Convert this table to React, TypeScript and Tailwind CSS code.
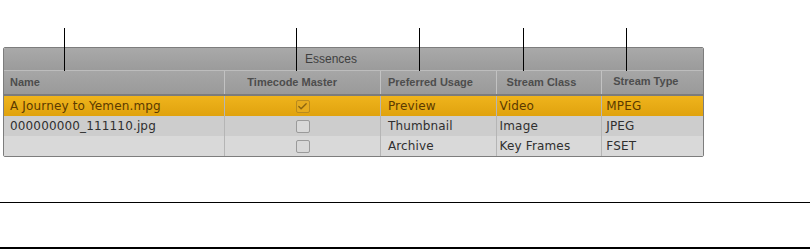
import { Check } from 'lucide-react'

const cols = [
  { label: 'Name', w: 'w-[221px]', head: 'pl-[6px]', cell: 'pl-[6px]' },
  { label: 'Timecode Master', w: 'w-[156px]', head: 'pl-[22px]', cell: 'justify-center' },
  { label: 'Preferred Usage', w: 'w-[116px]', head: 'pl-[7px]', cell: 'pl-[7px]' },
  { label: 'Stream Class', w: 'w-[106px]', head: 'pl-[10px]', cell: 'pl-[3px]' },
  { label: 'Stream Type', w: 'w-[102px]', head: 'pl-[11px] pb-[3px]', cell: 'pl-[4px]' },
]

const rows = [
  { name: 'A Journey to Yemen.mpg', master: true, usage: 'Preview', cls: 'Video', type: 'MPEG', selected: true },
  { name: '000000000_111110.jpg', master: false, usage: 'Thumbnail', cls: 'Image', type: 'JPEG' },
  { name: '', master: false, usage: 'Archive', cls: 'Key Frames', type: 'FSET' },
]

const callouts = [64, 296, 419, 523, 626]

function Box({ checked, selected }: { checked: boolean; selected?: boolean }) {
  return (
    <div
      className={`w-[14px] h-[13px] rounded-[2px] border flex items-center justify-center ${
        selected ? 'border-[#b98a1e] bg-[#e6ab1e]' : 'border-[#9a9a9a] bg-[#d8d8d8]'
      }`}
    >
      {checked && <Check size={11} strokeWidth={3} className="text-[#8a6410]" />}
    </div>
  )
}

export default function App() {
  return (
    <div className="relative w-[810px] h-[250px] bg-white font-['DejaVu_Sans',sans-serif]">
      {callouts.map((x) => (
        <div key={x} className="absolute top-[28px] h-[43px] w-px bg-black z-10" style={{ left: x }} />
      ))}

      <div className="pt-[47px] pl-[3px]">
        <div className="w-[701px] border border-[#7d7d7d] rounded-[2px] overflow-hidden">
          <div className="h-[23px] bg-gradient-to-b from-[#a9a9a9] to-[#9b9b9b] border-b border-[#bdbdbd] flex items-center pl-[301px] text-[12px] text-[#3f3f3f] font-['Liberation_Sans',sans-serif]">
            Essences
          </div>
          <div className="flex h-[25px] bg-gradient-to-b from-[#a6a6a6] to-[#9a9a9a] border-b-2 border-[#7c7c7c]">
            {cols.map((c, i) => (
              <div
                key={c.label}
                className={`${c.w} ${c.head} flex items-center text-[11px] font-bold text-[#4d4d4d] font-['Liberation_Sans',sans-serif] ${
                  i > 0 ? 'border-l border-[#c2c2c2]' : ''
                }`}
              >
                {c.label}
              </div>
            ))}
          </div>
          {rows.map((r, ri) => {
            const bg = r.selected
              ? 'bg-gradient-to-b from-[#efb41c] to-[#e0a20d] text-[#5b3a00]'
              : ri === 1
                ? 'bg-[#cdcdcd] text-[#2f2f2f]'
                : 'bg-[#d9d9d9] text-[#2f2f2f]'
            const vals = [r.name, null, r.usage, r.cls, r.type]
            return (
              <div key={ri} className={`flex h-[20px] text-[12px] tracking-[0.15px] ${bg}`}>
                {cols.map((c, i) => (
                  <div
                    key={c.label}
                    className={`${c.w} ${c.cell} flex items-center whitespace-nowrap ${
                      i > 0 ? 'border-l border-[#b5b5b5]' : ''
                    }`}
                  >
                    {i === 1 ? <Box checked={r.master} selected={r.selected} /> : vals[i]}
                  </div>
                ))}
              </div>
            )
          })}
        </div>
      </div>

      <div className="mt-[45px] h-px bg-black" />
      <div className="mt-[44px] h-[2px] bg-black" />
    </div>
  )
}
